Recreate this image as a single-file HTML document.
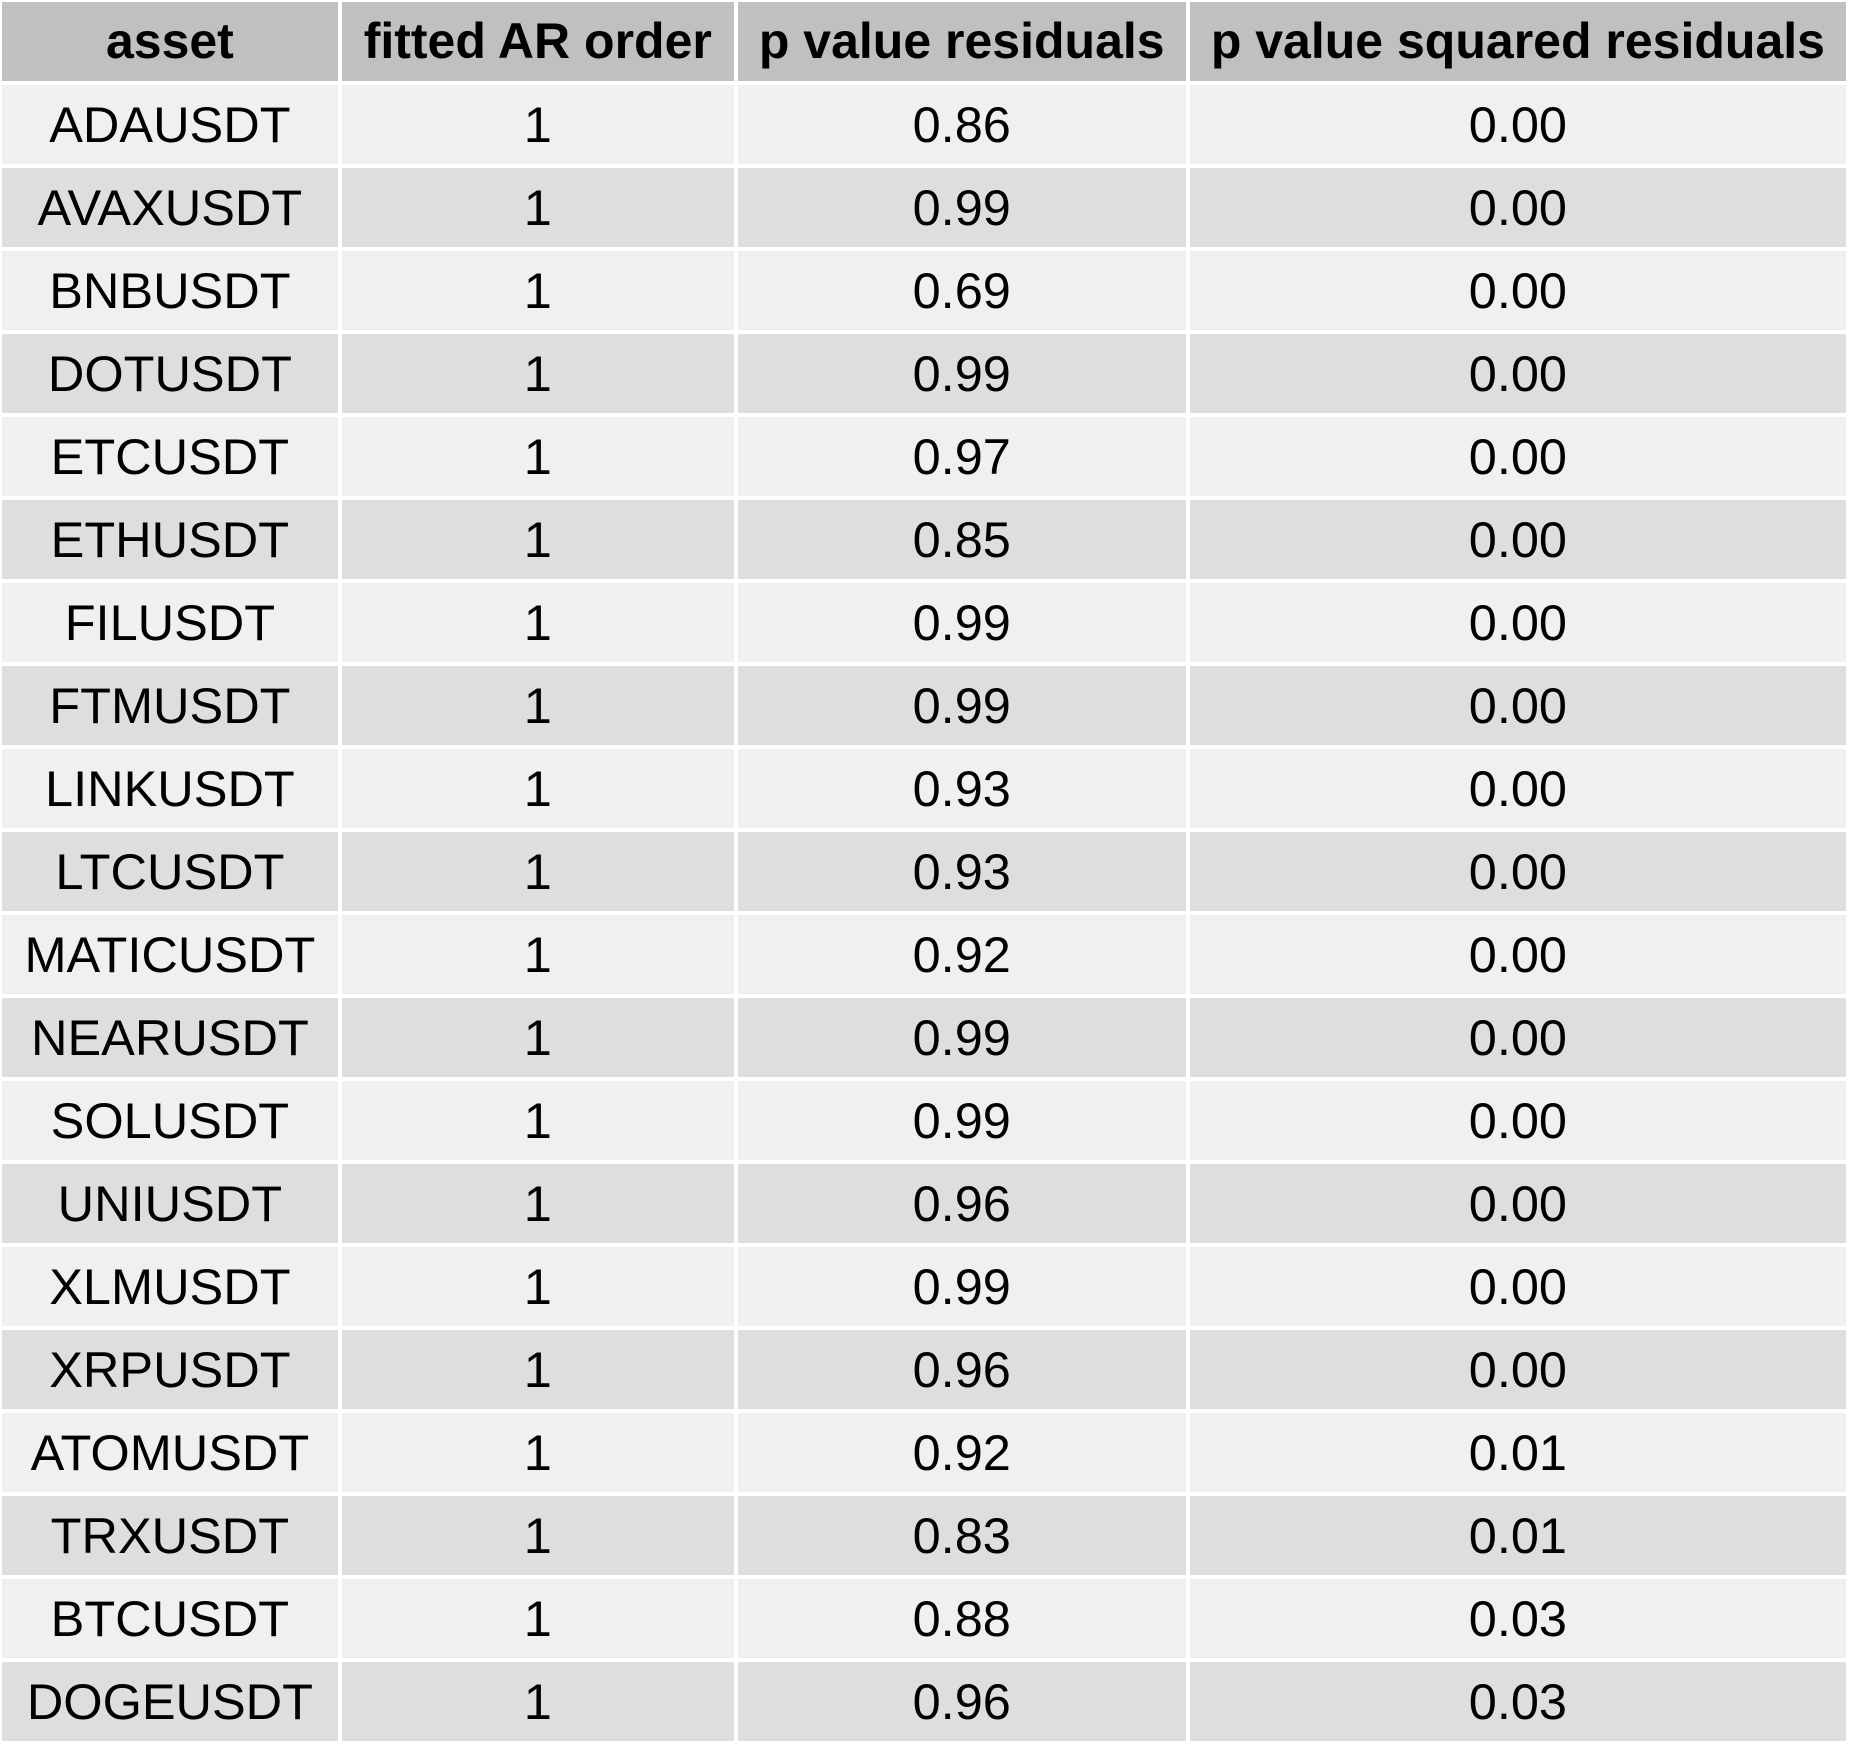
<!DOCTYPE html>
<html><head><meta charset="utf-8"><style>
html,body{margin:0;padding:0;background:#fff;width:1850px;height:1743px;overflow:hidden}
table{position:absolute;left:0;top:0;border-collapse:separate;border-spacing:4px 4px;margin:-2px 0 0 -2px;font-family:"Liberation Sans",Arial,sans-serif;color:#000}
td,th{height:79px;padding:0;text-align:center;font-size:50.5px;line-height:79px;overflow:hidden}
th{background:#c0c0c0;font-weight:bold;font-size:50px}
tr:nth-child(even) td{background:#f0f0f0}
tr:nth-child(odd) td{background:#dedede}
</style></head><body>
<table>
<colgroup><col style="width:336px"><col style="width:393px"><col style="width:449px"><col style="width:658px"></colgroup>
<tr><th>asset</th><th>fitted AR order</th><th>p value residuals</th><th>p value squared residuals</th></tr>
<tr><td>ADAUSDT</td><td>1</td><td>0.86</td><td>0.00</td></tr>
<tr><td>AVAXUSDT</td><td>1</td><td>0.99</td><td>0.00</td></tr>
<tr><td>BNBUSDT</td><td>1</td><td>0.69</td><td>0.00</td></tr>
<tr><td>DOTUSDT</td><td>1</td><td>0.99</td><td>0.00</td></tr>
<tr><td>ETCUSDT</td><td>1</td><td>0.97</td><td>0.00</td></tr>
<tr><td>ETHUSDT</td><td>1</td><td>0.85</td><td>0.00</td></tr>
<tr><td>FILUSDT</td><td>1</td><td>0.99</td><td>0.00</td></tr>
<tr><td>FTMUSDT</td><td>1</td><td>0.99</td><td>0.00</td></tr>
<tr><td>LINKUSDT</td><td>1</td><td>0.93</td><td>0.00</td></tr>
<tr><td>LTCUSDT</td><td>1</td><td>0.93</td><td>0.00</td></tr>
<tr><td>MATICUSDT</td><td>1</td><td>0.92</td><td>0.00</td></tr>
<tr><td>NEARUSDT</td><td>1</td><td>0.99</td><td>0.00</td></tr>
<tr><td>SOLUSDT</td><td>1</td><td>0.99</td><td>0.00</td></tr>
<tr><td>UNIUSDT</td><td>1</td><td>0.96</td><td>0.00</td></tr>
<tr><td>XLMUSDT</td><td>1</td><td>0.99</td><td>0.00</td></tr>
<tr><td>XRPUSDT</td><td>1</td><td>0.96</td><td>0.00</td></tr>
<tr><td>ATOMUSDT</td><td>1</td><td>0.92</td><td>0.01</td></tr>
<tr><td>TRXUSDT</td><td>1</td><td>0.83</td><td>0.01</td></tr>
<tr><td>BTCUSDT</td><td>1</td><td>0.88</td><td>0.03</td></tr>
<tr><td>DOGEUSDT</td><td>1</td><td>0.96</td><td>0.03</td></tr>
</table>
</body></html>
